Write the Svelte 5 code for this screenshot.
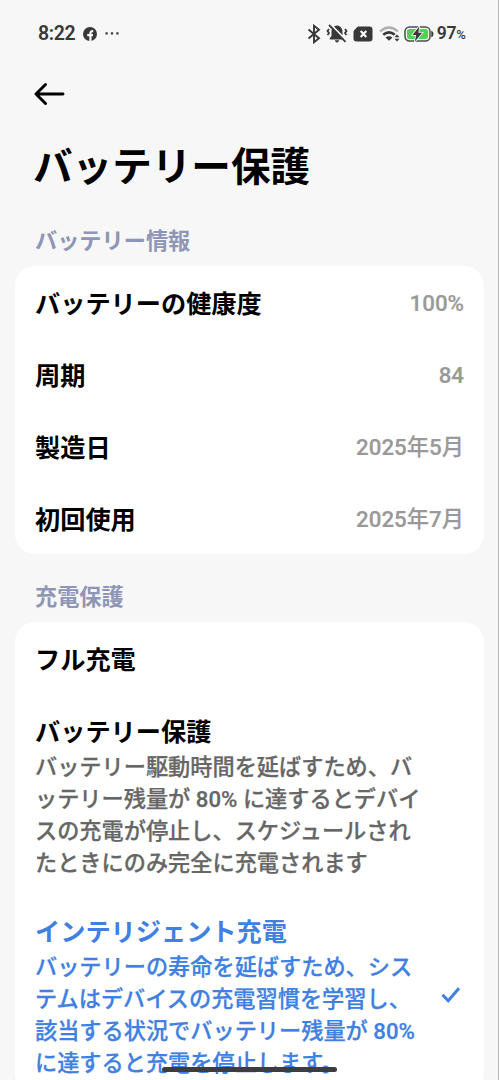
<script>
	const info = [
		{ label: "バッテリーの健康度", value: "100%" },
		{ label: "周期", value: "84" },
		{ label: "製造日", value: "2025年5月" },
		{ label: "初回使用", value: "2025年7月" }
	];

	const modes = [
		{ id: "full", title: "フル充電", lines: [] },
		{
			id: "protect",
			title: "バッテリー保護",
			lines: [
				"バッテリー駆動時間を延ばすため、バ",
				"ッテリー残量が 80% に達するとデバイ",
				"スの充電が停止し、スケジュールされ",
				"たときにのみ完全に充電されます"
			]
		},
		{
			id: "smart",
			title: "インテリジェント充電",
			lines: [
				"バッテリーの寿命を延ばすため、シス",
				"テムはデバイスの充電習慣を学習し、",
				"該当する状況でバッテリー残量が 80%",
				"に達すると充電を停止します。"
			]
		}
	];

	let selected = $state("smart");
</script>

<div class="screen">
	<header class="status">
		<span class="time">8:22</span>
		<svg class="fb" width="14" height="14" viewBox="0 0 14 14">
			<circle cx="7" cy="7" r="7" fill="#383838" />
			<path d="M7.4 14V6.2Q7.4 3.9 10.2 4.1M4.2 8.2H10" fill="none" stroke="#f7f7f7" stroke-width="2.2" />
		</svg>
		<svg class="dots" width="14" height="4" viewBox="0 0 14 4" fill="#383838">
			<rect x="0.5" y="0.3" width="2.2" height="2.2" />
			<rect x="5.9" y="0.3" width="2.2" height="2.2" />
			<rect x="11.3" y="0.3" width="2.2" height="2.2" />
		</svg>

		<div class="right">
			<svg width="14" height="20" viewBox="0 0 14 20" fill="none" stroke="#383838" stroke-width="1.9">
				<path d="M1.5 5.5L12 14.2L7 18.2V1.8L12 5.8L1.5 14.5" />
			</svg>
			<svg class="bell" width="22" height="20" viewBox="0 0 22 20">
				<path d="M11 1.5C7.3 2 5.5 4.5 5.5 8V12L3.8 14.2V15.5H18.2V14.2L16.5 12V8C16.5 4.5 14.7 2 11 1.5Z" fill="#383838" />
				<path d="M8.8 16.2H13.2Q12.5 18.5 11 18.5T8.8 16.2Z" fill="#383838" />
				<path d="M3 5L1.5 7L3 9L1.5 11M19 5L20.5 7L19 9L20.5 11" fill="none" stroke="#383838" stroke-width="1.8" />
				<path d="M5 1L20.5 16.5" stroke="#f7f7f7" stroke-width="2" />
				<path d="M3 1L19.5 17.8" stroke="#383838" stroke-width="1.8" />
			</svg>
			<svg class="sim" width="20" height="16" viewBox="0 0 20 16">
				<path d="M5.5 .5H16.5Q19.5 .5 19.5 3.5V12.5Q19.5 15.5 16.5 15.5H3.5Q.5 15.5 .5 12.5V6Q.5 5 1.2 4.2L4 1.2Q4.6 .5 5.5 .5Z" fill="#383838" />
				<path d="M7.7 5L13.3 11M13.3 5L7.7 11" stroke="#fff" stroke-width="2.1" />
			</svg>
			<svg class="wifi" width="22" height="16" viewBox="0 0 22 16" fill="none">
				<path d="M1 5.5Q10 -2.5 19 5.5" stroke="#b0b0b0" stroke-width="2.2" />
				<path d="M4.2 8.8Q10 4 15.8 8.8" stroke="#383838" stroke-width="2.6" />
				<path d="M6.5 11.5Q10 9 13.5 11.5L10 14.8Z" fill="#383838" />
				<path d="M15.5 11.2L18 8.5L20.5 11.2ZM15.5 12.8L18 15.5L20.5 12.8Z" fill="#383838" />
			</svg>
			<svg class="battery" width="30" height="18" viewBox="0 0 30 18">
				<rect x="1" y="2" width="25" height="14" rx="4.5" fill="#f7f7f7" stroke="#4a504a" stroke-width="1.5" />
				<rect x="3" y="4" width="21" height="10" rx="2.5" fill="#4bd554" />
				<path d="M27.3 5.5Q29.5 6.5 29.5 9T27.3 12.5Z" fill="#383838" />
				<path d="M15.3 1.5L8.5 10H12.2L10.7 16.8L18.2 7.8H14.3Z" fill="#383838" stroke="#f7f7f7" stroke-width="1.6" paint-order="stroke" />
			</svg>
			<span class="level">97<small>%</small></span>
		</div>
	</header>

	<button class="back" aria-label="戻る">
		<svg width="32" height="24" viewBox="0 0 32 24" fill="none" stroke="#000" stroke-width="2.9" stroke-linecap="round" stroke-linejoin="round">
			<path d="M29 12H2M11.5 2.5L2 12L11.5 21.5" />
		</svg>
	</button>

	<h1>バッテリー保護</h1>

	<h2>バッテリー情報</h2>
	<section class="card">
		{#each info as row}
			<div class="row">
				<span class="title">{row.label}</span>
				<span class="value">{row.value}</span>
			</div>
		{/each}
	</section>

	<h2 class="second">充電保護</h2>
	<section class="card">
		{#each modes as mode}
			<button
				class="row mode"
				class:tall={mode.lines.length > 0}
				class:active={selected == mode.id}
				onclick={() => (selected = mode.id)}
			>
				<span class="body">
					<span class="title">{mode.title}</span>
					{#each mode.lines as line}
						<span class="line">{line}</span>
					{/each}
				</span>
				{#if selected == mode.id}
					<svg class="check" width="20" height="18" viewBox="0 0 20 18" fill="none" stroke="#3f80e2" stroke-width="3">
						<path d="M1.5 8.8L7.2 14.8L18 2.2" />
					</svg>
				{/if}
			</button>
		{/each}
	</section>

	<div class="home-bar"></div>
</div>

<style>
	:global(body) {
		background: #f7f7f7;
	}

	.screen {
		position: relative;
		box-sizing: border-box;
		height: 1080px;
		padding: 0 14px 0 15px;
		overflow: hidden;
		border-right: 1px solid #b4b4b4;
		background: #f7f7f7;
		color: #000;
		font-family: Roboto, "Noto Sans CJK JP", sans-serif;
	}

	.status {
		display: flex;
		align-items: center;
		height: 67px;
		padding: 0 19px 0 23px;
		color: #383838;
		font-weight: 700;
	}
	.time {
		font-size: 19.5px;
		font-weight: 600;
		letter-spacing: -0.4px;
	}
	.fb {
		margin-left: 8px;
	}
	.dots {
		margin-left: 8px;
	}
	.right {
		display: flex;
		align-items: center;
		margin-left: auto;
	}
	.bell {
		margin-left: 5px;
	}
	.sim {
		margin-left: 5px;
	}
	.wifi {
		margin-left: 6px;
	}
	.battery {
		margin-left: 3px;
	}
	.level {
		margin-left: 3px;
		font-size: 17.5px;
		line-height: 20px;
		font-weight: 600;
		letter-spacing: -0.3px;
	}
	small {
		font-size: 13px;
		font-weight: 500;
		letter-spacing: -0.8px;
	}

	button {
		padding: 0;
		border: none;
		background: none;
		color: inherit;
		font: inherit;
		text-align: left;
		cursor: pointer;
	}
	.back {
		display: block;
		height: 24px;
		margin: 15px 0 0 19px;
	}
	.back svg {
		display: block;
	}

	h1 {
		margin: 33px 0 0 18px;
		font-size: 39.6px;
		line-height: 58px;
		font-weight: 700;
	}
	h2 {
		margin: 28px 0 9px 20px;
		color: #8e95b5;
		font-size: 22.2px;
		line-height: 32px;
		font-weight: 700;
	}
	h2.second {
		margin-top: 27px;
	}

	.card {
		border-radius: 20px;
		background: #fff;
	}
	.row {
		display: flex;
		align-items: center;
		justify-content: space-between;
		box-sizing: border-box;
		width: 100%;
		height: 72px;
		padding: 2px 20px 0 20px;
	}
	.title {
		padding-top: 4px;
		font-size: 25.2px;
		line-height: 36px;
		font-weight: 700;
	}
	.value {
		color: #999;
		font-size: 22.3px;
		line-height: 30px;
		font-weight: 500;
		-webkit-text-stroke: 0.2px;
	}

	.row.tall {
		height: 200px;
	}
	.body {
		display: flex;
		flex-direction: column;
	}
	.line {
		color: #666;
		font-size: 22.2px;
		line-height: 32px;
		font-weight: 500;
		white-space: nowrap;
		-webkit-text-stroke: 0.25px;
	}
	.active .title,
	.active .line {
		color: #3f80e2;
	}
	.check {
		margin: 0 3px 1px 0;
	}

	.home-bar {
		position: absolute;
		left: 162px;
		bottom: 8px;
		width: 175px;
		height: 5px;
		border-radius: 3px;
		background: #3d3d40;
	}
</style>
